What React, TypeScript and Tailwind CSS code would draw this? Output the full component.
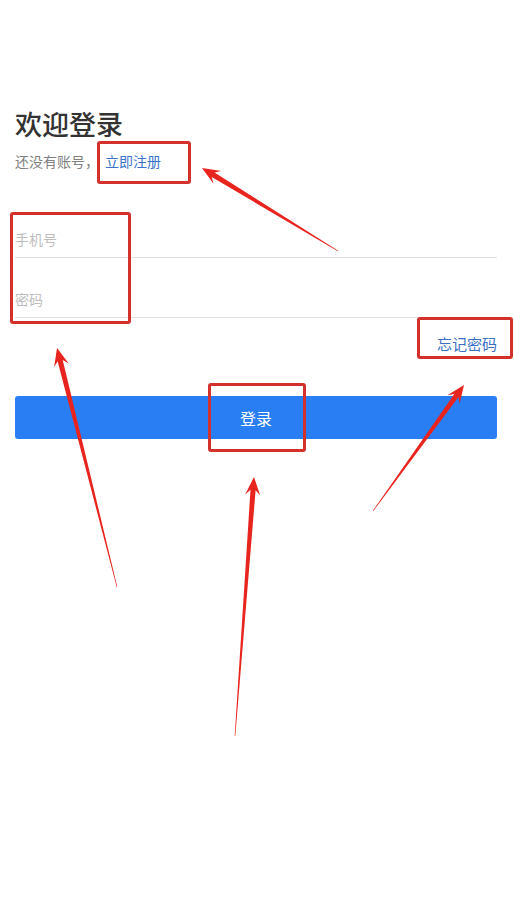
import React from "react";

type Pt = [number, number];

// tapered markup arrow, thin at the tail and wide at the head
function arrowPoints(tail: Pt, tip: Pt) {
  const dx = tip[0] - tail[0];
  const dy = tip[1] - tail[1];
  const len = Math.hypot(dx, dy);
  const ux = dx / len;
  const uy = dy / len;
  const nx = -uy;
  const ny = ux;
  const head = 18;
  const neck = 13;
  const barb = 7.5;
  const shaft = 2.6;
  const tailW = 0.3;
  const at = (along: number, side: number): string =>
    `${(tip[0] - ux * along + nx * side).toFixed(1)},${(tip[1] - uy * along + ny * side).toFixed(1)}`;
  return [
    at(len, tailW),
    at(neck, shaft),
    at(head, barb),
    at(0, 0),
    at(head, -barb),
    at(neck, -shaft),
    at(len, -tailW),
  ].join(" ");
}

const arrows: { tail: Pt; tip: Pt }[] = [
  { tail: [338, 251], tip: [202, 168] },
  { tail: [117, 587], tip: [57, 348] },
  { tail: [235, 736], tip: [254, 477] },
  { tail: [373, 511], tip: [464, 385] },
];

const boxes = [
  "left-[97px] top-[141px] w-[94px] h-[43px]",
  "left-[10px] top-[212px] w-[121px] h-[112px]",
  "left-[417px] top-[317px] w-[96px] h-[42px]",
  "left-[208px] top-[383px] w-[98px] h-[69px]",
];

export default function App() {
  return (
    <div
      className="relative w-[514px] h-[897px] bg-white overflow-hidden"
      style={{ fontFamily: '"Noto Sans CJK SC", "Noto Sans", sans-serif' }}
    >
      <div className="flex flex-col pl-[15px] pr-[17px] pt-[107px]">
        <h1 className="text-[27px] leading-[34px] font-medium text-[#333333]">欢迎登录</h1>
        <div className="mt-[10px] text-[14px] leading-[20px] text-[#808080]">
          还没有账号，<span className="ml-[6px] text-[#3a73c9]">立即注册</span>
        </div>

        <input
          className="mt-[50px] h-[37px] w-full border-b border-[#e2e2e2] text-[14px] text-[#333] placeholder:text-[#bdbdbd] outline-none"
          placeholder="手机号"
        />
        <input
          type="password"
          className="mt-[23px] h-[37px] w-full border-b border-[#e2e2e2] text-[14px] text-[#333] placeholder:text-[#bdbdbd] outline-none"
          placeholder="密码"
        />

        <div className="flex justify-end mt-[15px]">
          <span className="text-[15px] leading-[22px] text-[#3a6fc2]">忘记密码</span>
        </div>

        <button className="mt-[41px] h-[43px] w-full rounded-[3px] bg-[#2a7ef4] text-white text-[16px]">
          登录
        </button>
      </div>

      {boxes.map((b) => (
        <div
          key={b}
          className={`absolute ${b} border-[3px] border-[#d4302c] rounded-[3px] pointer-events-none`}
        />
      ))}

      <svg className="absolute left-0 top-0 pointer-events-none" width={514} height={897}>
        {arrows.map((a, i) => (
          <polygon key={i} points={arrowPoints(a.tail, a.tip)} fill="#e8241e" />
        ))}
      </svg>
    </div>
  );
}
